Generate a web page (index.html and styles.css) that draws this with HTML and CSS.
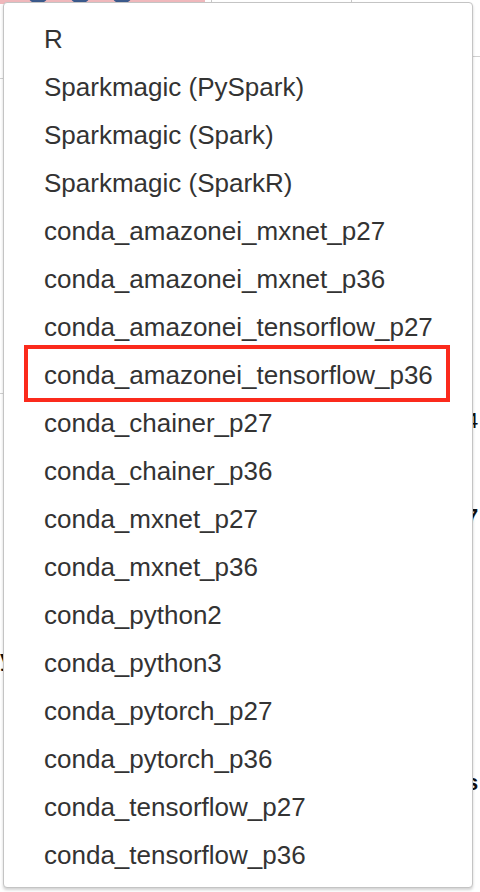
FILE: index.html
```html
<!DOCTYPE html>
<html>
<head>
<meta charset="utf-8">
<link rel="stylesheet" href="styles.css">
</head>
<body>
<div class="backdrop">
  <div class="banner">
    <span class="dot d1"></span><span class="dot d2"></span><span class="dot d3"></span>
  </div>
  <div class="vline v1"></div>
  <div class="vline v2"></div>
  <div class="hline h1"></div>
  <div class="hline h2"></div>
  <div class="hline h3"></div>
  <span class="frag f1">4</span>
  <span class="frag f2">7</span>
  <span class="frag f3">s</span>
  <span class="frag f4">y</span>
</div>
<ul class="menu">
  <li class="item">R</li>
  <li class="item">Sparkmagic (PySpark)</li>
  <li class="item">Sparkmagic (Spark)</li>
  <li class="item">Sparkmagic (SparkR)</li>
  <li class="item">conda_amazonei_mxnet_p27</li>
  <li class="item">conda_amazonei_mxnet_p36</li>
  <li class="item">conda_amazonei_tensorflow_p27</li>
  <li class="item marked">conda_amazonei_tensorflow_p36</li>
  <li class="item">conda_chainer_p27</li>
  <li class="item">conda_chainer_p36</li>
  <li class="item">conda_mxnet_p27</li>
  <li class="item">conda_mxnet_p36</li>
  <li class="item">conda_python2</li>
  <li class="item">conda_python3</li>
  <li class="item">conda_pytorch_p27</li>
  <li class="item">conda_pytorch_p36</li>
  <li class="item">conda_tensorflow_p27</li>
  <li class="item">conda_tensorflow_p36</li>
</ul>
</body>
</html>
```
FILE: styles.css
```css
html, body {
  margin: 0;
  padding: 0;
  background: #ffffff;
  width: 480px;
  height: 892px;
  overflow: hidden;
  font-family: "Liberation Sans", Arial, sans-serif;
}
.backdrop {
  position: relative;
  width: 480px;
  height: 892px;
}
.banner {
  position: absolute;
  left: 0;
  top: 0;
  width: 205px;
  height: 4px;
  background: #f0b8bc;
  overflow: hidden;
}
.dot {
  position: absolute;
  top: -14px;
  width: 20px;
  height: 18px;
  border-radius: 50%;
  background: #3c5a8c;
}
.d1 { left: 28px; }
.d2 { left: 70px; }
.d3 { left: 112px; }
.vline {
  position: absolute;
  top: 0;
  width: 1px;
  height: 5px;
  background: #c8c8c8;
}
.v1 { left: 211px; }
.v2 { left: 351px; }
.hline {
  position: absolute;
  height: 1px;
  background: #d0d0d0;
}
.h1 { left: 0; width: 4px; top: 78px; }
.h2 { left: 472px; width: 8px; top: 56px; }
.h3 { left: 0; width: 4px; top: 393px; }
.frag {
  position: absolute;
  font-size: 22px;
  color: #111;
  line-height: 1;
}
.f1 { left: 466px; top: 410px; }
.f2 { left: 466px; top: 506px; font-weight: bold; }
.f3 { left: 466px; top: 772px; font-weight: bold; }
.f4 { left: 0; top: 648px; font-weight: bold; }
.menu {
  position: absolute;
  left: 3px;
  top: 2px;
  width: 470px;
  height: 886px;
  margin: 0;
  padding: 12px 0 0 0;
  list-style: none;
  background: #ffffff;
  border: 1px solid #c4c4c4;
  border-radius: 4px;
  box-shadow: 0 2px 3px rgba(0, 0, 0, 0.18);
  box-sizing: border-box;
}
.item {
  position: relative;
  height: 48px;
  line-height: 48px;
  padding-left: 40px;
  font-size: 26px;
  color: #333333;
  white-space: nowrap;
}
.marked::after {
  content: "";
  position: absolute;
  left: 20px;
  right: 22px;
  top: -6px;
  height: 57px;
  border: 4px solid #fb2a1c;
  box-sizing: border-box;
}
```
